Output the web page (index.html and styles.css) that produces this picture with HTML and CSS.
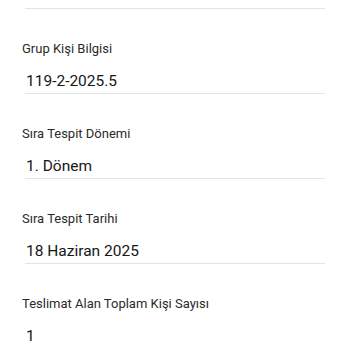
FILE: index.html
```html
<!DOCTYPE html>
<html lang="tr">
<head>
    <meta charset="UTF-8">
    <meta name="viewport" content="width=device-width, initial-scale=1.0">
    <title>Sıra Bilgisi</title>
    <link rel="stylesheet" href="styles.css">
</head>
<body>
    <div class="form">
        <div class="value-box cut"></div>

        <div class="field">
            <div class="label">Grup Kişi Bilgisi</div>
            <div class="value-box">119-2-2025.5</div>
        </div>

        <div class="field">
            <div class="label">Sıra Tespit Dönemi</div>
            <div class="value-box">1. Dönem</div>
        </div>

        <div class="field">
            <div class="label">Sıra Tespit Tarihi</div>
            <div class="value-box">18 Haziran 2025</div>
        </div>

        <div class="field">
            <div class="label">Teslimat Alan Toplam Kişi Sayısı</div>
            <div class="value-box plain">1</div>
        </div>
    </div>
</body>
</html>
```

FILE: styles.css
```css
body {
    margin: 0;
    padding: 0;
    background: #ffffff;
    font-family: Roboto, "Noto Sans", sans-serif;
    color: #1c1c1c;
}

.form {
    width: 350px;
}

.field {
    padding-top: 31px;
}

.label {
    padding-left: 22px;
    font-size: 13px;
    line-height: 18px;
    color: #2b2b2b;
}

.value-box {
    margin: 11px 25px 0;
    padding: 0 0 0 1px;
    font-size: 15.5px;
    line-height: 24px;
    color: #161616;
    border-bottom: 1.5px solid #e3e3e3;
}

.value-box.cut {
    height: 7.5px;
    margin-top: 0;
    padding: 0;
}

.value-box.plain {
    border-bottom: none;
}
```
